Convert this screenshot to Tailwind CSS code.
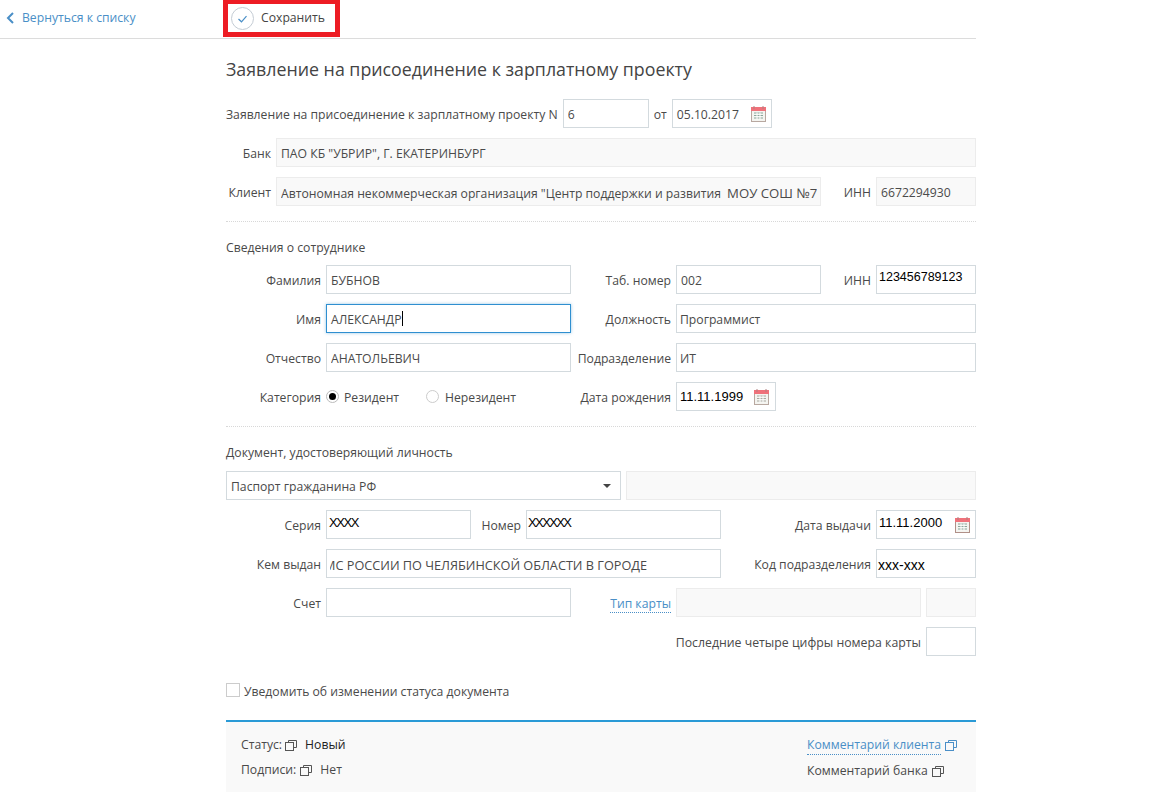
<!DOCTYPE html>
<html lang="ru">
<head>
  <meta charset="UTF-8" />
  <title>Заявление на присоединение к зарплатному проекту</title>
  <script src="https://cdn.jsdelivr.net/npm/@tailwindcss/browser@4"></script>
</head>
<body class="bg-white font-['Open_Sans',sans-serif] text-[12.2px] text-[#4a4a4a] h-[793px] overflow-hidden">
  <div class="w-[976px]">
    <!-- Top bar -->
    <div class="relative h-[39px] border-b border-[#dcdcdc] flex items-center">
      <a class="flex items-center w-[226px] pl-[6px] gap-[8px] text-[#4a8fc7] pb-[2px]">
        <svg width="8" height="12" viewBox="0 0 8 12" fill="none" stroke="#4a8fc7" stroke-width="2"><path d="M7 1L2 6l5 5"/></svg>
        Вернуться к списку
      </a>
      <div class="flex items-center gap-[7px] ml-[5px] pb-[2px]">
        <svg width="23" height="23" viewBox="0 0 23 23" fill="none"><circle cx="11.5" cy="11.5" r="11" stroke="#c4ccd4"/><path d="M7.5 12l3 2.8 5-5.6" stroke="#4a8fc7" stroke-width="1.2"/></svg>
        <span class="text-[#444]">Сохранить</span>
      </div>
      <div class="absolute left-[223px] top-0 w-[117px] h-[37px] border-[5px] border-t-[4px] border-[#ed1c24]"></div>
    </div>

    <main class="ml-[226px] w-[750px]">
      <h1 class="text-[17.8px] leading-[24px] mt-[18px] text-[#444]">Заявление на присоединение к зарплатному проекту</h1>

      <div class="mt-[18px] flex items-center h-[29px]">
        <span class="pt-[4px]">Заявление на присоединение к зарплатному проекту N</span>
        <input class="ml-[5px] w-[86px] h-[29px] border border-[#d3dade] px-[4px] pt-[2px] outline-none" value="6" />
        <span class="ml-[5px] pt-[4px]">от</span>
        <div class="ml-[5px] w-[100px] h-[29px] border border-[#d3dade] pl-[4px] pr-[5px] flex items-center justify-between">
          <span class="pt-[4px]">05.10.2017</span>
          <svg width="15" height="16" viewBox="0 0 15 16"><rect x=".5" y="1.5" width="14" height="14" fill="#f4f4f0" stroke="#b8a8a0"/><rect x="0" y="1" width="15" height="4" fill="#f0717a"/><path d="M3 0v3M12 0v3" stroke="#b08080"/><path d="M3 7h9M3 9.500h9M3 12h9" stroke="#8aa59a"/><path d="M6 6.500v7M9 6.500v7" stroke="#fff"/></svg>
        </div>
      </div>

      <div class="mt-[10px] flex items-center h-[29px]">
        <span class="w-[45px] text-right pt-[4px]">Банк</span>
        <div class="ml-[5px] flex-1 h-[29px] border border-[#ececec] bg-[#f9f9f9] px-[4px] pt-[4px] flex items-center">ПАО КБ "УБРИР", Г. ЕКАТЕРИНБУРГ</div>
      </div>

      <div class="mt-[10px] flex items-center h-[29px]">
        <span class="w-[45px] text-right pt-[4px]">Клиент</span>
        <div class="ml-[5px] w-[545px] h-[29px] border border-[#ececec] bg-[#f9f9f9] pl-[4px] pr-[3px] pt-[4px] flex items-center"><span class="block overflow-hidden whitespace-nowrap w-full">Автономная некоммерческая организация "Центр поддержки и развития <span class="ml-[3px] text-[13.2px]">МОУ СОШ №76"</span></span></div>
        <span class="w-[50px] text-right pt-[4px]">ИНН</span>
        <div class="ml-[5px] w-[100px] h-[29px] border border-[#ececec] bg-[#f9f9f9] px-[4px] pt-[4px] flex items-center">6672294930</div>
      </div>

      <div class="mt-[15px] border-t border-dotted border-[#d8d8d8]"></div>

      <h2 class="mt-[17px] leading-[18px]">Сведения о сотруднике</h2>

      <div class="mt-[8px] flex items-center h-[29px]">
        <span class="w-[95px] text-right pt-[4px]">Фамилия</span>
        <input class="ml-[5px] w-[245px] h-[29px] border border-[#d3dade] px-[4px] pt-[2px] outline-none" value="БУБНОВ" />
        <span class="w-[100px] text-right pt-[4px]">Таб. номер</span>
        <input class="ml-[5px] w-[145px] h-[29px] border border-[#d3dade] px-[4px] pt-[2px] outline-none" value="002" />
        <span class="w-[50px] text-right pt-[4px]">ИНН</span>
        <div class="ml-[5px] w-[100px] h-[29px] border border-[#d3dade] pl-[2px] pt-[4px] font-['Liberation_Sans',sans-serif] text-[12.5px] leading-[15px] text-black">123456789123</div>
      </div>

      <div class="mt-[10px] flex items-center h-[29px]">
        <span class="w-[95px] text-right pt-[4px]">Имя</span>
        <div class="ml-[5px] w-[245px] h-[29px] border border-[#2f8fd0] shadow-[0_0_3px_#2f8fd080] px-[4px] flex items-center"><span class="pt-[4px]">АЛЕКСАНДР</span><span class="w-px h-[15px] bg-black"></span></div>
        <span class="w-[100px] text-right pt-[4px]">Должность</span>
        <input class="ml-[5px] flex-1 h-[29px] border border-[#d3dade] px-[3px] pt-[2px] outline-none" value="Программист" />
      </div>

      <div class="mt-[10px] flex items-center h-[29px]">
        <span class="w-[95px] text-right pt-[4px]">Отчество</span>
        <input class="ml-[5px] w-[245px] h-[29px] border border-[#d3dade] px-[4px] pt-[2px] outline-none" value="АНАТОЛЬЕВИЧ" />
        <span class="w-[100px] text-right pt-[4px]">Подразделение</span>
        <input class="ml-[5px] flex-1 h-[29px] border border-[#d3dade] px-[3px] pt-[2px] outline-none" value="ИТ" />
      </div>

      <div class="mt-[10px] flex items-center h-[29px]">
        <span class="w-[95px] text-right pt-[4px]">Категория</span>
        <div class="ml-[5px] w-[245px] flex items-center">
          <span class="w-[13px] h-[13px] rounded-full border border-[#bbb] flex items-center justify-center"><span class="w-[7px] h-[7px] rounded-full bg-black"></span></span>
          <span class="ml-[5px] w-[82px] pt-[4px]">Резидент</span>
          <span class="w-[13px] h-[13px] rounded-full border border-[#ccc]"></span>
          <span class="ml-[6px] pt-[4px]">Нерезидент</span>
        </div>
        <span class="w-[100px] text-right pt-[4px]">Дата рождения</span>
        <div class="ml-[5px] w-[100px] h-[29px] border border-[#d3dade] pl-[3px] pr-[6px] flex items-center justify-between font-['Liberation_Sans',sans-serif] text-[13px] text-black">
          <span>11.11.1999</span>
          <svg width="15" height="16" viewBox="0 0 15 16"><rect x=".5" y="1.5" width="14" height="14" fill="#f4f4f0" stroke="#b8a8a0"/><rect x="0" y="1" width="15" height="4" fill="#f0717a"/><path d="M3 0v3M12 0v3" stroke="#b08080"/><path d="M3 7h9M3 9.500h9M3 12h9" stroke="#a8a8a0"/><path d="M6 6.500v7M9 6.500v7" stroke="#fff"/></svg>
        </div>
      </div>

      <div class="mt-[15px] border-t border-dotted border-[#d8d8d8]"></div>

      <h2 class="mt-[17px] leading-[18px]">Документ, удостоверяющий личность</h2>

      <div class="mt-[9px] flex items-center h-[29px]">
        <div class="w-[395px] h-[29px] border border-[#d3dade] pl-[4px] pr-[9px] flex items-center justify-between">
          <span class="pt-[4px]">Паспорт гражданина РФ</span>
          <span class="w-0 h-0 border-x-[4px] border-x-transparent border-t-[4px] border-t-[#444]"></span>
        </div>
        <div class="ml-[5px] flex-1 h-[29px] border border-[#ececec] bg-[#f9f9f9]"></div>
      </div>

      <div class="mt-[10px] flex items-center h-[29px]">
        <span class="w-[95px] text-right pt-[4px]">Серия</span>
        <div class="ml-[5px] w-[145px] h-[29px] border border-[#d3dade] px-[2px] pt-[3px] font-['Liberation_Sans',sans-serif] text-[13px] tracking-[-1.4px] leading-[18px] text-black">XXXX</div>
        <span class="w-[50px] text-right pt-[4px]">Номер</span>
        <div class="ml-[5px] w-[195px] h-[29px] border border-[#d3dade] px-[1px] pt-[3px] font-['Liberation_Sans',sans-serif] text-[13px] tracking-[-1.6px] leading-[18px] text-black">XXXXXX</div>
        <span class="w-[150px] text-right pt-[4px]">Дата выдачи</span>
        <div class="ml-[5px] w-[100px] h-[29px] border border-[#d3dade] pl-[2px] pr-[5px] flex items-center justify-between font-['Liberation_Sans',sans-serif] text-[13px] text-black">
          <span class="pb-[3px]">11.11.2000</span>
          <svg width="15" height="16" viewBox="0 0 15 16"><rect x=".5" y="1.5" width="14" height="14" fill="#f4f4f0" stroke="#b09088"/><rect x="0" y="1" width="15" height="4" fill="#f0717a"/><path d="M3 0v3M12 0v3" stroke="#b08080"/><path d="M3 7h9M3 9.500h9M3 12h9" stroke="#8aa59a"/><path d="M6 6.500v7M9 6.500v7" stroke="#fff"/></svg>
        </div>
      </div>

      <div class="mt-[10px] flex items-center h-[29px]">
        <span class="w-[95px] text-right pt-[4px]">Кем выдан</span>
        <div class="ml-[5px] w-[395px] h-[29px] border border-[#d3dade] pl-[3px] pr-[73px] pt-[4px] flex items-center"><span class="flex-1 flex justify-end overflow-hidden whitespace-nowrap text-[12.7px]">УФМС РОССИИ ПО ЧЕЛЯБИНСКОЙ ОБЛАСТИ В ГОРОДЕ</span></div>
        <span class="w-[150px] text-right pt-[4px]">Код подразделения</span>
        <div class="ml-[5px] w-[100px] h-[29px] border border-[#d3dade] pl-[1px] pt-[6px] font-['Liberation_Sans',sans-serif] text-[14px] leading-[18px] text-black">xxx-xxx</div>
      </div>

      <div class="mt-[10px] flex items-center h-[29px]">
        <span class="w-[95px] text-right pt-[4px]">Счет</span>
        <input class="ml-[5px] w-[245px] h-[29px] border border-[#d3dade] outline-none" />
        <span class="w-[100px] text-right pt-[4px]"><a class="text-[#4a8fc7] border-b border-dotted border-[#4a8fc7]">Тип карты</a></span>
        <div class="ml-[5px] w-[245px] h-[29px] border border-[#ececec] bg-[#f9f9f9]"></div>
        <div class="ml-[5px] flex-1 h-[29px] border border-[#ececec] bg-[#f9f9f9]"></div>
      </div>

      <div class="mt-[10px] flex items-center justify-end h-[29px]">
        <span class="pt-[4px] text-[12.3px]">Последние четыре цифры номера карты</span>
        <input class="ml-[5px] w-[50px] h-[29px] border border-[#d3dade] outline-none" />
      </div>

      <div class="mt-[27px] flex items-center h-[14px]">
        <span class="w-[14px] h-[14px] border border-[#ccc]"></span>
        <span class="ml-[4px] pt-[4px]">Уведомить об изменении статуса документа</span>
      </div>

      <!-- Status footer -->
      <footer class="mt-[23px] h-[72px] border-t-2 border-[#2a9ad6] bg-[#f9f9f9] pl-[15px] pr-[19px] pt-[14px] flex justify-between">
        <div class="flex flex-col gap-[7px] leading-[18px]">
          <div class="flex items-center">Статус:
            <svg class="ml-[3px]" width="12" height="11" viewBox="0 0 12 11" fill="none" stroke="#555"><path d="M3.500 2.500v-2h8v7h-3"/><rect x=".5" y="2.500" width="8" height="8"/></svg>
            <span class="ml-[8px] text-[#222]">Новый</span>
          </div>
          <div class="flex items-center">Подписи:
            <svg class="ml-[4px]" width="12" height="11" viewBox="0 0 12 11" fill="none" stroke="#555"><path d="M3.500 2.500v-2h8v7h-3"/><rect x=".5" y="2.500" width="8" height="8"/></svg>
            <span class="ml-[8px]">Нет</span>
          </div>
        </div>
        <div class="flex flex-col gap-[7px] leading-[18px]">
          <div class="flex items-center text-[#4a8fc7]"><a class="border-b border-dotted border-[#4a8fc7]">Комментарий клиента</a>
            <svg class="ml-[4px]" width="12" height="11" viewBox="0 0 12 11" fill="none" stroke="#4a8fc7"><path d="M3.500 2.500v-2h8v7h-3"/><rect x=".5" y="2.500" width="8" height="8"/></svg>
          </div>
          <div class="flex items-center">Комментарий банка
            <svg class="ml-[4px]" width="12" height="11" viewBox="0 0 12 11" fill="none" stroke="#555"><path d="M3.500 2.500v-2h8v7h-3"/><rect x=".5" y="2.500" width="8" height="8"/></svg>
          </div>
        </div>
      </footer>
    </main>
  </div>
</body>
</html>
